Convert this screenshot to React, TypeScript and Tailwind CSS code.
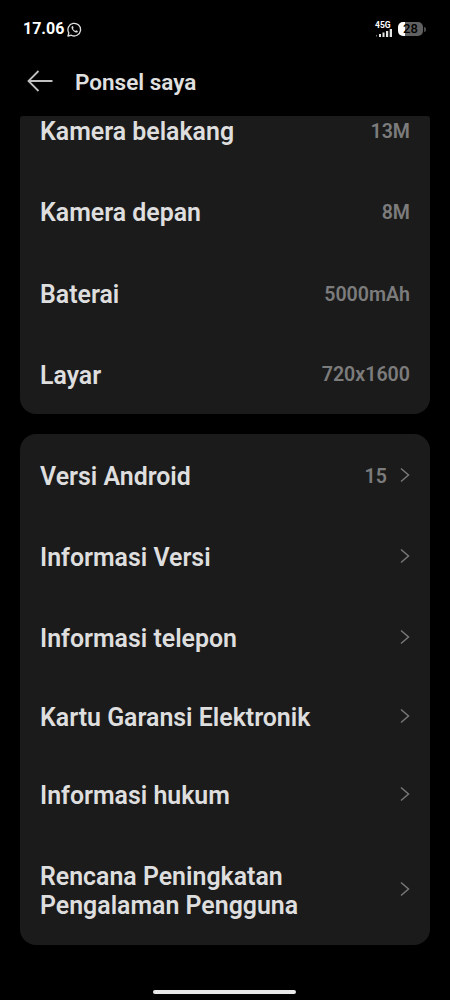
import clsx from "clsx";

type InfoRow = {
  label: string;
  value?: string;
  link?: boolean;
  rowClass: string;
};

const HARDWARE_ROWS: InfoRow[] = [
  { label: "Kamera belakang", value: "13M", rowClass: "h-[81px]" },
  { label: "Kamera depan", value: "8M", rowClass: "h-[81px]" },
  { label: "Baterai", value: "5000mAh", rowClass: "h-[83px]" },
  { label: "Layar", value: "720x1600", rowClass: "h-[78px]" },
];

const SOFTWARE_ROWS: InfoRow[] = [
  { label: "Versi Android", value: "15", link: true, rowClass: "h-[81px]" },
  { label: "Informasi Versi", link: true, rowClass: "h-[81px]" },
  { label: "Informasi telepon", link: true, rowClass: "h-[81px]" },
  { label: "Kartu Garansi Elektronik", link: true, rowClass: "h-[76px]" },
  { label: "Informasi hukum", link: true, rowClass: "h-[80px]" },
  {
    label: "Rencana Peningkatan Pengalaman Pengguna",
    link: true,
    rowClass: "h-[110px] pt-px",
  },
];

function Chevron() {
  return (
    <svg className="-mt-[3px] ml-[13px] h-4 w-[10px] shrink-0" viewBox="0 0 10 16" fill="none">
      <path d="M1 1.5L8.5 8L1 14.5" stroke="#777777" strokeWidth="1.5" />
    </svg>
  );
}

function Row({ label, value, link, rowClass }: InfoRow) {
  return (
    <div className={clsx("flex shrink-0 items-center justify-between px-5", rowClass)}>
      <span className="max-w-[290px] text-[24.9px] leading-[29px] font-semibold text-[#dedede]">
        {label}
      </span>
      <div className="flex items-center">
        {value && (
          <span className="text-[19.6px] leading-6 font-semibold text-[#7c7c7c]">{value}</span>
        )}
        {link && <Chevron />}
      </div>
    </div>
  );
}

function StatusBar() {
  return (
    <div className="flex h-[58px] items-center justify-between pr-[24px] pl-[23px] text-white">
      <div className="flex items-center gap-[3px]">
        <span className="text-[16px] leading-5 font-bold">17.06</span>
        <svg className="h-[15px] w-[15px]" viewBox="0 0 15 15" fill="none">
          <path
            d="M1 14L1.8 10.8A6.3 6.3 0 1 1 4.3 13.2Z"
            stroke="#dddddd"
            strokeWidth="1.3"
            strokeLinejoin="round"
          />
          <path
            d="M5.2 4.1C3.7 5.2 4.8 7.3 6.2 8.7C7.7 10.2 9.6 11.2 10.8 9.9L10.7 9L9.2 8.3L8.3 9C7.3 8.6 6.4 7.7 6 6.8L6.6 6L6 4.3Z"
            fill="#dddddd"
          />
        </svg>
      </div>

      <div className="flex items-center gap-[5px]">
        <div className="flex flex-col items-start">
          <span className="text-[8.5px] leading-[7px] font-bold">45G</span>
          <svg className="h-2 w-[18px]" viewBox="0 0 18 8" fill="#e5e5e5">
            <rect x="1" y="6" width="1" height="1.5" fill="#777777" />
            <rect x="4" y="5" width="2" height="3" />
            <rect x="7.5" y="3.5" width="2" height="4.5" />
            <rect x="11" y="2" width="2.2" height="6" />
            <rect x="14.7" y="0" width="2.3" height="8" />
          </svg>
        </div>
        <div className="flex items-center gap-px">
          <div className="flex h-[14px] w-[25px] items-center justify-center rounded-[5px] bg-linear-to-r from-white from-28% to-[#606060] to-28%">
            <span className="text-[13px] leading-[14px] font-medium text-black">28</span>
          </div>
          <div className="h-[5px] w-[2px] rounded-r-full bg-[#4c4c4c]" />
        </div>
      </div>
    </div>
  );
}

export default function App() {
  return (
    <div className="flex h-[1000px] w-[450px] flex-col overflow-hidden bg-black font-['Roboto',sans-serif]">
      <StatusBar />

      <header className="flex h-[58px] items-center pb-[10px] pl-[27px]">
        <svg className="-mt-[2px] h-[22px] w-[26px]" viewBox="0 0 26 22" fill="none">
          <path d="M11.5 1L1.5 11L11.5 21M1.5 11H25.5" stroke="#c0c0c0" strokeWidth="1.8" />
        </svg>
        <h1 className="ml-[22px] text-[22.5px] leading-7 font-semibold text-[#e0e0e0]">
          Ponsel saya
        </h1>
      </header>

      <main className="flex flex-col gap-5 px-5">
        {/* scrolled list, first row is cut by the header */}
        <section className="flex h-[298px] flex-col justify-end overflow-hidden rounded-t-[3px] rounded-b-[16px] bg-[#1b1b1b]">
          {HARDWARE_ROWS.map((row) => (
            <Row key={row.label} {...row} />
          ))}
        </section>

        <section className="flex h-[511px] flex-col rounded-[16px] bg-[#1b1b1b] pt-[2px]">
          {SOFTWARE_ROWS.map((row) => (
            <Row key={row.label} {...row} />
          ))}
        </section>
      </main>

      <div className="mt-auto mb-[6px] ml-[153px] h-[4px] w-[143px] rounded-full bg-[#e8e8e8]" />
    </div>
  );
}
